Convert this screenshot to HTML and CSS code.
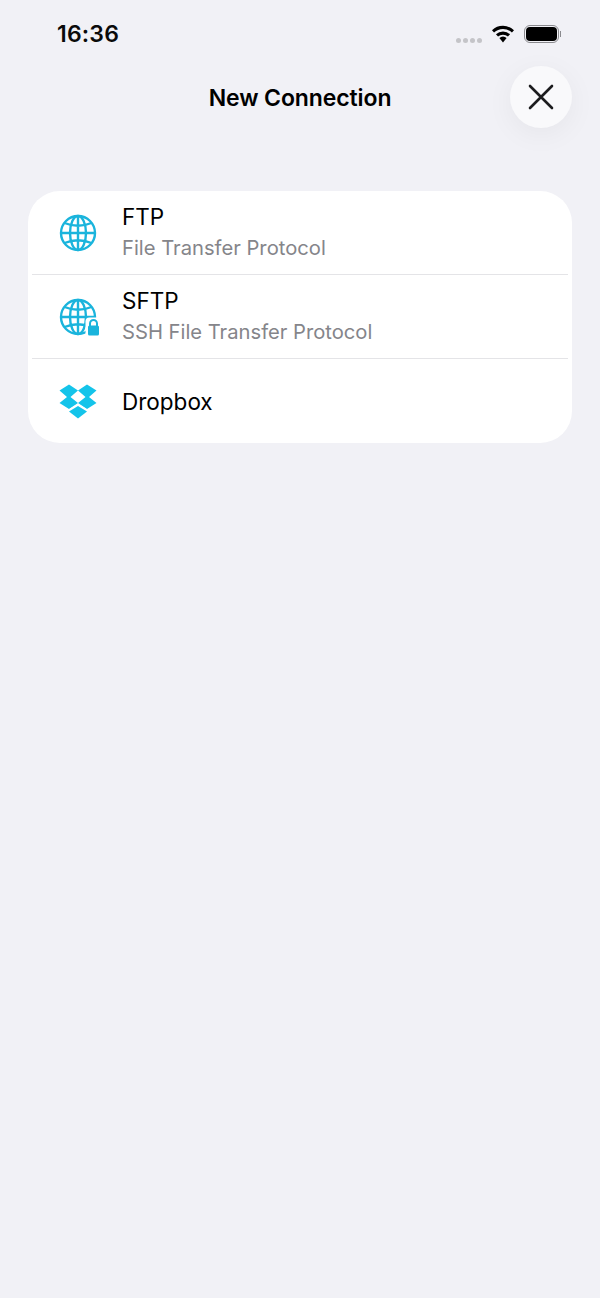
FILE: index.html
```html
<!DOCTYPE html>
<html lang="en">
<head>
    <meta charset="UTF-8">
    <meta name="viewport" content="width=device-width, initial-scale=1.0">
    <title>New Connection</title>
    <link rel="stylesheet" href="styles.css">
</head>
<body>
<!-- Status bar -->
<div class="status-bar">
    <span class="time">16:36</span>
    <div class="status-icons">
        <div class="signal-dots"><i></i><i></i><i></i><i></i></div>
        <svg class="wifi" width="22" height="18" viewBox="0 0 22 18">
            <path d="M1 6.4 A14.5 14.5 0 0 1 21 6.4" fill="none" stroke="#000" stroke-width="3.1"/>
            <path d="M5 10.4 A9 9 0 0 1 17 10.4" fill="none" stroke="#000" stroke-width="3.1"/>
            <path d="M7.4 13 A5 5 0 0 1 14.6 13 L11 17.4 Z" fill="#000"/>
        </svg>
        <div class="battery"><div class="battery-level"></div></div>
        <div class="battery-cap"></div>
    </div>
</div>

<!-- Header -->
<div class="header">
    <h1>New Connection</h1>
    <button class="close-btn" type="button" aria-label="Close">
        <svg width="26" height="26" viewBox="0 0 26 26">
            <path d="M2 2 L24 24 M24 2 L2 24" stroke="#1c1c1e" stroke-width="2.6" stroke-linecap="round"/>
        </svg>
    </button>
</div>

<!-- Connection types -->
<div class="card">
    <div class="row">
        <svg class="row-icon" width="38" height="38" viewBox="0 0 38 38">
            <g fill="none" stroke="#1ab4dc" stroke-width="2.4">
                <circle cx="19" cy="19" r="17"/>
                <ellipse cx="19" cy="19" rx="8" ry="17"/>
                <path d="M19 2 V36 M2 19 H36 M5.5 9 Q19 14.5 32.5 9 M5.5 29 Q19 23.5 32.5 29"/>
            </g>
        </svg>
        <div class="row-text">
            <div class="row-title">FTP</div>
            <div class="row-sub">File Transfer Protocol</div>
        </div>
    </div>
    <div class="row">
        <svg class="row-icon" width="38" height="38" viewBox="0 0 38 38">
            <g fill="none" stroke="#1ab4dc" stroke-width="2.4">
                <circle cx="19" cy="19" r="17"/>
                <ellipse cx="19" cy="19" rx="8" ry="17"/>
                <path d="M19 2 V36 M2 19 H36 M5.5 9 Q19 14.5 32.5 9 M5.5 29 Q19 23.5 32.5 29"/>
            </g>
            <rect x="26.5" y="19.5" width="16" height="20" rx="4" fill="#fff"/>
            <path d="M31 28 V25.5 A3.5 3.5 0 0 1 38 25.5 V28" fill="none" stroke="#1ab4dc" stroke-width="2"/>
            <rect x="29" y="27.5" width="11" height="10" rx="1.5" fill="#1ab4dc"/>
        </svg>
        <div class="row-text">
            <div class="row-title">SFTP</div>
            <div class="row-sub">SSH File Transfer Protocol</div>
        </div>
    </div>
    <div class="row">
        <svg class="row-icon" width="38" height="38" viewBox="0 0 38 38">
            <g fill="#14c4ea">
                <path d="M10 2.5 L19 8.5 L11.5 15 L19 21 L10 27 L0.5 21 L8 15 L0.5 8.5 Z"/>
                <path d="M28 2.5 L37.5 8.5 L30 15 L37.5 21 L28 27 L19 21 L26.5 15 L19 8.5 Z"/>
                <path d="M19 24 L28 29.5 L19 36.5 L10 29.5 Z"/>
            </g>
            <path d="M9 28.5 L19 22.5 L29 28.5" fill="none" stroke="#fff" stroke-width="1.2"/>
        </svg>
        <div class="row-text">
            <div class="row-title">Dropbox</div>
        </div>
    </div>
</div>
</body>
</html>
```

FILE: styles.css
```css
html, body {
    height: 100%;
}

body {
    margin: 0;
    background-color: #f1f1f6;
    font-family: Inter, "Liberation Sans", sans-serif;
    color: #000;
}

.status-bar {
    display: flex;
    justify-content: space-between;
    align-items: center;
    height: 34px;
    padding: 17px 39px 0 57px;
}

.time {
    font-size: 23px;
    font-weight: 600;
    letter-spacing: 0.2px;
    color: #0a0a0a;
}

.status-icons {
    display: flex;
    align-items: center;
}

.signal-dots {
    display: flex;
    gap: 2px;
    margin: 12px 10px 0 0;
}

.signal-dots i {
    width: 5px;
    height: 5px;
    border-radius: 50%;
    background-color: #c4c4c8;
}

.wifi {
    margin-right: 10px;
}

.battery {
    box-sizing: border-box;
    width: 35px;
    height: 18px;
    padding: 1px;
    border: 1.5px solid #8a8a8e;
    border-radius: 6px;
}

.battery-level {
    height: 100%;
    background-color: #000;
    border-radius: 4px;
}

.battery-cap {
    width: 1.5px;
    height: 6px;
    margin-left: 1px;
    background-color: #8a8a8e;
}

.header {
    display: flex;
    justify-content: center;
    align-items: center;
    position: relative;
    height: 62px;
    margin-top: 15px;
}

h1 {
    margin: 0;
    padding-top: 2px;
    font-size: 23px;
    font-weight: 600;
    letter-spacing: -0.1px;
}

.close-btn {
    position: absolute;
    top: 0;
    right: 28px;
    display: flex;
    justify-content: center;
    align-items: center;
    width: 62px;
    height: 62px;
    padding: 0;
    border: none;
    border-radius: 50%;
    background-color: #f9f9fb;
    box-shadow: 0 6px 28px rgba(0, 0, 0, 0.05);
}

.card {
    margin: 63px 28px 0;
    padding: 0 4px;
    background-color: #fff;
    border-radius: 32px;
}

.row {
    display: flex;
    align-items: center;
    height: 83px;
    padding-left: 27px;
    border-bottom: 1px solid #e4e4e7;
}

.row:last-child {
    height: 84px;
    border-bottom: none;
}

.row:last-child .row-text {
    padding-top: 2px;
}

.row-icon {
    flex-shrink: 0;
    overflow: visible;
}

.row-text {
    margin-left: 25px;
}

.row-title {
    font-size: 22.5px;
    line-height: 30px;
}

.row-sub {
    margin: 2px 0;
    font-size: 20.2px;
    line-height: 28px;
    color: #85858a;
}
```
